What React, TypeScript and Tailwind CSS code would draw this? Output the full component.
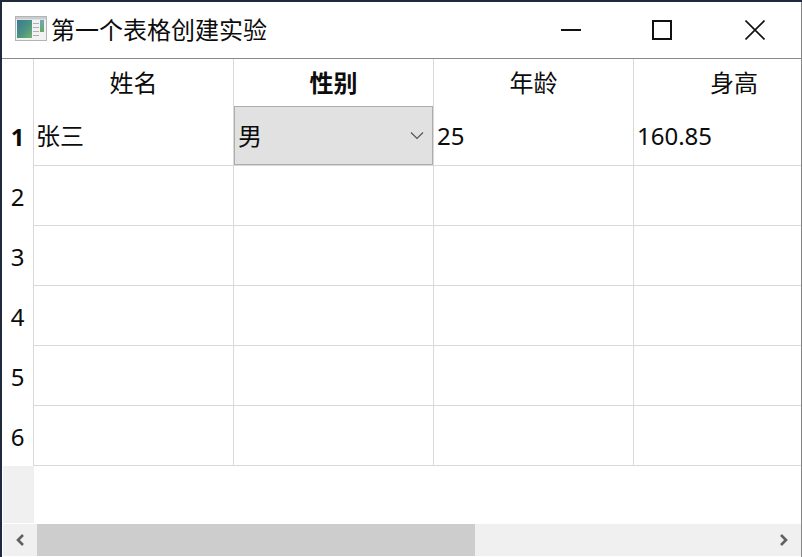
import React from "react";

const font = { fontFamily: '"Noto Sans", "Noto Sans CJK SC", sans-serif' };

function AppIcon() {
  return (
    <svg width="32" height="25" viewBox="0 0 32 25" className="shrink-0">
      <defs>
        <linearGradient id="g" x1="0" y1="0" x2="1" y2="1">
          <stop offset="0" stopColor="#3a7896" />
          <stop offset="0.55" stopColor="#4b9482" />
          <stop offset="1" stopColor="#78b26c" />
        </linearGradient>
        <linearGradient id="h" x1="0" y1="0" x2="0" y2="1">
          <stop offset="0" stopColor="#6fa8b8" />
          <stop offset="1" stopColor="#6aa65f" />
        </linearGradient>
      </defs>
      <rect x="0.5" y="0.5" width="31" height="24" fill="#f2f2f2" stroke="#b4b4b4" />
      <rect x="1" y="1" width="30" height="2.5" fill="#c9cdd0" />
      <rect x="2" y="4" width="15" height="18" fill="url(#g)" />
      <rect x="18" y="7" width="6" height="1" fill="#a9b0b4" />
      <rect x="18" y="11" width="6" height="1" fill="#a9b0b4" />
      <rect x="18" y="15" width="6" height="1" fill="#a9b0b4" />
      <rect x="18" y="19" width="6" height="1" fill="#a9b0b4" />
      <rect x="25" y="4" width="4" height="12" fill="url(#h)" />
    </svg>
  );
}

function Chevron({ dir }: { dir: "left" | "right" }) {
  return (
    <svg width="10" height="12" viewBox="0 0 10 12">
      <path
        d={dir === "left" ? "M8 1 L3 6 L8 11" : "M2 1 L7 6 L2 11"}
        fill="none"
        stroke="#606060"
        strokeWidth="2.6"
      />
    </svg>
  );
}

const headers = ["姓名", "性别", "年龄", "身高"];
const rows = [1, 2, 3, 4, 5, 6];

function Cell({ children, last }: { children?: React.ReactNode; last?: boolean }) {
  return (
    <div
      className={`h-[60px] border-b border-[#d9d9d9] flex items-center pl-[3px] text-[24px] text-[#0c0c0c] overflow-hidden whitespace-nowrap ${
        last ? "" : "border-r"
      }`}
    >
      {children}
    </div>
  );
}

export default function App() {
  return (
    <div
      className="w-[802px] h-[557px] bg-[#1f2a3c] pl-[2px] pt-[2px] overflow-hidden"
      style={font}
    >
      <div className="w-[800px] h-[555px] bg-white flex flex-col border-r border-[#858585]">
        <div className="h-[56px] flex items-center border-b border-[#8a8a8a] shrink-0 box-content">
          <div className="pl-[13px] pr-[4px] pb-[3px] flex items-center">
            <AppIcon />
          </div>
          <div className="text-[24px] leading-none text-[#0c0c0c] flex-1 whitespace-nowrap pb-[1px]">
            第一个表格创建实验
          </div>
          <div className="flex items-center">
            <div className="w-[88px] h-[56px] flex items-center justify-center">
              <svg width="20" height="20" viewBox="0 0 20 20">
                <rect x="0" y="9" width="20" height="2" fill="#111" />
              </svg>
            </div>
            <div className="w-[94px] h-[56px] flex items-center justify-center">
              <svg width="20" height="20" viewBox="0 0 20 20">
                <rect x="1" y="1" width="18" height="18" fill="none" stroke="#111" strokeWidth="2" />
              </svg>
            </div>
            <div className="w-[92px] h-[56px] flex items-center justify-center">
              <svg width="20" height="20" viewBox="0 0 20 20">
                <path d="M0.5 0.5 L19.5 19.5 M19.5 0.5 L0.5 19.5" stroke="#111" strokeWidth="1.6" fill="none" />
              </svg>
            </div>
          </div>
        </div>

        <div className="grid grid-cols-[32px_200px_200px_200px_167px] grid-rows-[47px_repeat(6,60px)] flex-none">
          <div className="border-r border-[#d9d9d9]" />
          {headers.map((h, i) => (
            <div
              key={h}
              className={`flex justify-center items-center text-[24px] text-[#0c0c0c] ${
                i === 3 ? "w-[200px]" : "border-r border-[#d9d9d9]"
              } ${i === 1 ? "font-bold" : ""}`}
            >
              {h}
            </div>
          ))}
          {rows.map((r) => (
            <React.Fragment key={r}>
              <div
                className={`h-[60px] border-r border-[#d9d9d9] flex items-center justify-center text-[24px] text-[#0c0c0c] pt-[2px] ${
                  r === 1 ? "font-bold" : ""
                }`}
              >
                {r}
              </div>
              {r === 1 ? (
                <>
                  <Cell>
                    <span className="-ml-[1px]">张三</span>
                  </Cell>
                  <div className="h-[60px] border-b border-r border-[#d9d9d9]">
                    <div className="h-[59px] border border-[#adadad] bg-[#e1e1e1] flex items-center justify-between pl-[3px] pr-[8px] text-[24px] text-[#0c0c0c]">
                      <span>男</span>
                      <svg width="14" height="9" viewBox="0 0 14 9">
                        <path d="M1 1.5 L7 7.5 L13 1.5" fill="none" stroke="#555" strokeWidth="1.2" />
                      </svg>
                    </div>
                  </div>
                  <Cell>25</Cell>
                  <Cell last>160.85</Cell>
                </>
              ) : (
                <>
                  <Cell />
                  <Cell />
                  <Cell />
                  <Cell last />
                </>
              )}
            </React.Fragment>
          ))}
        </div>

        <div className="flex-1 flex min-h-0 mb-[1px]">
          <div className="w-[31px] ml-[1px] bg-[#f0f0f0] h-full" />
        </div>

        <div className="h-[32px] flex bg-[#f0f0f0] ml-[1px] mb-[1px] shrink-0">
          <div className="w-[34px] flex items-center justify-center">
            <Chevron dir="left" />
          </div>
          <div className="w-[438px] bg-[#cdcdcd]" />
          <div className="flex-1" />
          <div className="w-[35px] flex items-center justify-center">
            <Chevron dir="right" />
          </div>
        </div>
      </div>
    </div>
  );
}
